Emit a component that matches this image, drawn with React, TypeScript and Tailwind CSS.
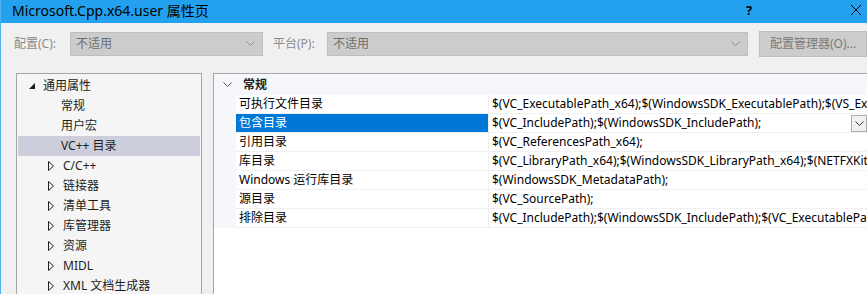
import React from 'react';

const ui = { fontFamily: '"Noto Sans", "Noto Sans CJK SC", sans-serif' };

function Chevron({ className }: { className?: string }) {
  return (
    <svg width="9" height="6" viewBox="0 0 9 6" className={className}>
      <path d="M0.5 0.5 L4.5 4.5 L8.5 0.5" fill="none" stroke="currentColor" strokeWidth="1" />
    </svg>
  );
}

function Combo({ width, label }: { width: string; label: string }) {
  return (
    <div className={`${width} h-[24px] bg-[#cccccc] border border-[#bfbfbf] flex items-center justify-between pl-[5px] pr-[7px] text-[#6d6d6d]`}>
      <span>{label}</span>
      <Chevron className="text-[#8c8c8c]" />
    </div>
  );
}

const treeChildren = ['常规', '用户宏', 'VC++ 目录'];
const treeGroups = ['C/C++', '链接器', '清单工具', '库管理器', '资源', 'MIDL', 'XML 文档生成器'];

const rows = [
  ['可执行文件目录', '$(VC_ExecutablePath_x64);$(WindowsSDK_ExecutablePath);$(VS_ExecutablePath_x64);$(PATH)'],
  ['包含目录', '$(VC_IncludePath);$(WindowsSDK_IncludePath);'],
  ['引用目录', '$(VC_ReferencesPath_x64);'],
  ['库目录', '$(VC_LibraryPath_x64);$(WindowsSDK_LibraryPath_x64);$(NETFXKitsDir)Lib\\um\\x64'],
  ['Windows 运行库目录', '$(WindowsSDK_MetadataPath);'],
  ['源目录', '$(VC_SourcePath);'],
  ['排除目录', '$(VC_IncludePath);$(WindowsSDK_IncludePath);$(VC_ExecutablePath_x64);'],
];

export default function App() {
  return (
    <div className="w-[867px] h-[294px] overflow-hidden bg-[#f0f0f0] text-[12px] text-black flex flex-col border-l border-[#4fb0ee]" style={ui}>
      {/* Title bar */}
      <div className="h-[23px] shrink-0 bg-[#23a1ee] flex items-center pl-[11px] text-[14px]">
        <span className="flex-1 -mt-[2px]">Microsoft.Cpp.x64.user 属性页</span>
        <span className="w-[20px] text-[13px] font-bold mr-[84px] -mt-[2px]">?</span>
        <svg width="12" height="12" viewBox="0 0 12 12" className="mr-[5px] -mt-[4px]">
          <path d="M1 1 L11 11 M11 1 L1 11" stroke="#000" strokeWidth="1" />
        </svg>
      </div>

      {/* Toolbar */}
      <div className="h-[50px] shrink-0 flex items-center pl-[13px] pb-[9px] text-[#8a8a8a]">
        <span className="w-[56px]">配置(C):</span>
        <Combo width="w-[193px]" label="不适用" />
        <span className="ml-[10px] w-[54px]">平台(P):</span>
        <Combo width="w-[421px]" label="不适用" />
        <div className="ml-[11px] h-[26px] flex-1 bg-[#cccccc] border border-[#bfbfbf] flex items-center pl-[10px] text-[#7a7a7a]">
          配置管理器(O)...
        </div>
      </div>

      {/* Body */}
      <div className="flex-1 flex pl-[15px] min-h-0">
        {/* Tree */}
        <div className="w-[186px] border-l border-t border-r border-[#a5a5a5] bg-[#f5f5f5] pt-[2px] px-[1px] text-[#1e1e1e]">
          <div className="h-[20px] flex items-center">
            <svg width="6" height="6" viewBox="0 0 6 6" className="ml-[11px] mr-[8px]">
              <path d="M6 0 L6 6 L0 6 Z" fill="#1e1e1e" />
            </svg>
            <span>通用属性</span>
          </div>
          {treeChildren.map((t, i) => (
            <div key={t} className={`h-[20px] flex items-center pl-[43px] ${i === 2 ? 'bg-[#cccedb]' : ''}`}>
              {t}
            </div>
          ))}
          {treeGroups.map((t) => (
            <div key={t} className="h-[20px] flex items-center">
              <svg width="6" height="10" viewBox="0 0 6 10" className="ml-[30px] mr-[9px]">
                <path d="M0.5 0.5 L5.5 5 L0.5 9.5 Z" fill="none" stroke="#1e1e1e" strokeWidth="1" />
              </svg>
              <span>{t}</span>
            </div>
          ))}
        </div>

        {/* Property grid */}
        <div className="ml-[11px] flex-1 border-l border-t border-[#a5a5a5] bg-white min-w-0 overflow-hidden">
          <div className="h-[21px] flex items-center bg-[#f5f7fa] font-bold text-[#1e1e1e]">
            <Chevron className="ml-[9px] mr-[11px] text-[#555]" />
            <span>常规</span>
          </div>
          {rows.map(([k, v], i) => (
            <div key={k} className="h-[19px] flex">
              <div className="w-[22px] shrink-0 bg-[#f5f7fa]" />
              <div className={`w-[253px] shrink-0 flex items-center pl-[3px] border-b border-r border-[#f0f0f0] ${i === 1 ? 'bg-[#0078d7] text-white' : ''}`}>
                {k}
              </div>
              <div className="flex-1 min-w-0 flex items-center border-b border-[#f0f0f0] relative">
                <span className="pl-[3px] whitespace-nowrap">{v}</span>
                {i === 1 && (
                  <div className="absolute right-0 top-[1px] w-[16px] h-[17px] bg-[#f0f0f0] border border-[#adadad] flex items-center justify-center">
                    <Chevron className="text-[#333]" />
                  </div>
                )}
              </div>
            </div>
          ))}
        </div>
      </div>
    </div>
  );
}
